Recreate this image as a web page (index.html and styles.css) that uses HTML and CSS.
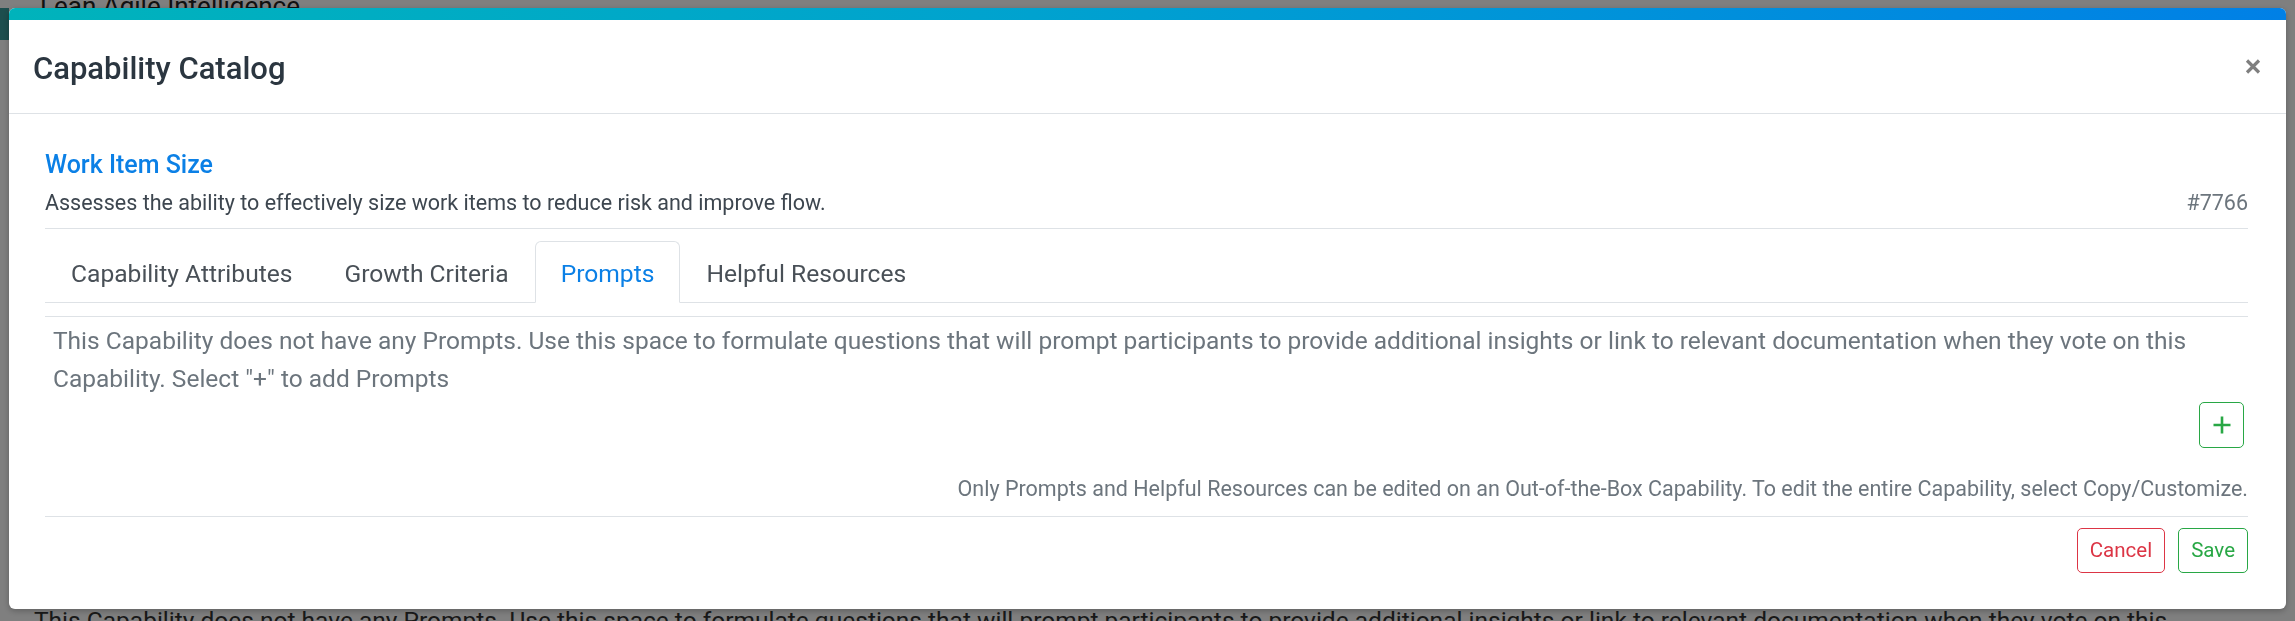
FILE: index.html
```html
<!DOCTYPE html>
<html lang="en">
<head>
<meta charset="utf-8">
<title>Capability Catalog</title>
<link rel="stylesheet" href="styles.css">
</head>
<body>
<div class="page">
  <header class="app-bar">
    <span class="logo"></span>
    <span class="brand">Lean Agile Intelligence</span>
  </header>
  <main class="page-main">
    <p class="page-text">This Capability does not have any Prompts. Use this space to formulate questions that will prompt participants to provide additional insights or link to relevant documentation when they vote on this Capability. Select "+" to add Prompts</p>
  </main>
</div>

<div class="backdrop"></div>

<div class="modal" role="dialog" aria-labelledby="modal-title">
  <div class="modal-accent"></div>
  <div class="modal-header">
    <h5 class="modal-title" id="modal-title">Capability Catalog</h5>
    <button class="close" type="button" aria-label="Close">
      <svg width="16" height="15" viewBox="0 0 16 15" aria-hidden="true">
        <path d="M2 1.5 L14 13.5 M14 1.5 L2 13.5" stroke="#7f7f7f" stroke-width="3.2" stroke-linecap="butt" fill="none"/>
      </svg>
    </button>
  </div>
  <div class="modal-body">
    <h6 class="cap-name">Work Item Size</h6>
    <div class="cap-desc-row">
      <span class="cap-desc">Assesses the ability to effectively size work items to reduce risk and improve flow.</span>
      <span class="cap-id">#7766</span>
    </div>
    <ul class="tabs">
      <li class="tab">Capability Attributes</li>
      <li class="tab">Growth Criteria</li>
      <li class="tab active">Prompts</li>
      <li class="tab">Helpful Resources</li>
    </ul>
    <div class="tab-pane">
      <p class="empty-text">This Capability does not have any Prompts. Use this space to formulate questions that will prompt participants to provide additional insights or link to relevant documentation when they vote on this Capability. Select "+" to add Prompts</p>
      <div class="add-row">
        <button class="btn-add" type="button" aria-label="Add Prompt">
          <svg width="18" height="18" viewBox="0 0 18 18" aria-hidden="true">
            <path d="M9 0.5 V17.5 M0.5 9 H17.5" stroke="#28a745" stroke-width="2.6" fill="none"/>
          </svg>
        </button>
      </div>
      <p class="note">Only Prompts and Helpful Resources can be edited on an Out-of-the-Box Capability. To edit the entire Capability, select Copy/Customize.</p>
    </div>
    <div class="modal-actions">
      <button class="btn btn-cancel" type="button">Cancel</button>
      <button class="btn btn-save" type="button">Save</button>
    </div>
  </div>
</div>
</body>
</html>
```

FILE: styles.css
```css
html, body {
  margin: 0;
  padding: 0;
}

body {
  background: #ffffff;
  font-family: Roboto, "Open Sans", Arial, sans-serif;
  color: #333333;
  overflow: hidden;
}

/* ---------- background page (under the overlay) ---------- */
.page {
  height: 621px;
  overflow: hidden;
}

.app-bar {
  display: flex;
  align-items: flex-start;
  height: 40px;
}

.logo {
  width: 9px;
  height: 32px;
  margin-top: 8px;
  background: #3a9c9c;
}

.brand {
  display: block;
  margin-left: 31px;
  font-size: 26px;
  line-height: 26px;
  margin-top: -7px;
  color: #222222;
}

.page-main {
  padding: 562px 60px 0 34px;
}

.page-text {
  margin: 0;
  font-size: 24.5px;
  line-height: 38px;
  color: #333333;
}

.backdrop {
  position: fixed;
  inset: 0;
  background: rgba(0, 0, 0, 0.5);
}

/* ---------- modal ---------- */
.modal {
  position: fixed;
  top: 8px;
  left: 9px;
  width: 2277px;
  background: #ffffff;
  border-radius: 6px;
  overflow: hidden;
  box-shadow: 0 2px 6px rgba(0, 0, 0, 0.25);
}

.modal-accent {
  height: 12px;
  background: linear-gradient(90deg, #00b3bb 0%, #00a2cf 45%, #0080e6 100%);
}

.modal-header {
  box-sizing: border-box;
  height: 94px;
  display: flex;
  align-items: center;
  justify-content: space-between;
  padding: 0 25px 0 24px;
  border-bottom: 1px solid #dee2e6;
}

.modal-title {
  margin: 0;
  padding-top: 4px;
  font-size: 31px;
  font-weight: 500;
  color: #2b3640;
  line-height: normal;
}

.close {
  display: flex;
  padding: 0;
  border: 0;
  background: transparent;
  cursor: pointer;
}

.modal-body {
  padding: 36px 38px 36px 36px;
}

.cap-name {
  margin: 0;
  font-size: 25px;
  line-height: 29px;
  font-weight: 500;
  color: #0b80e6;
}

.cap-desc-row {
  display: flex;
  justify-content: space-between;
  align-items: baseline;
  margin-top: 10px;
  padding-bottom: 11px;
  border-bottom: 1px solid #dee2e6;
  font-size: 21.5px;
  line-height: 28px;
}

.cap-desc {
  color: #3d464f;
}

.cap-id {
  color: #6c757d;
}

/* ---------- tabs ---------- */
.tabs {
  display: flex;
  list-style: none;
  margin: 12px 0 0;
  padding: 0;
  border-bottom: 1px solid #dee2e6;
}

.tab {
  padding: 17px 25px 14px;
  margin-bottom: -1px;
  border: 1px solid transparent;
  border-radius: 6px 6px 0 0;
  font-size: 24.6px;
  line-height: 29px;
  color: #495057;
}

.tab.active {
  color: #0b80e6;
  border-color: #dee2e6 #dee2e6 #ffffff;
  background: #ffffff;
}

.tab-pane {
  margin-top: 13px;
  border-top: 1px solid #dee2e6;
  padding: 5px 0 13px;
}

.empty-text {
  margin: 0;
  padding: 0 8px;
  font-size: 24.5px;
  line-height: 38px;
  color: #6c757d;
}

.add-row {
  display: flex;
  justify-content: flex-end;
  margin-top: 4px;
  padding-right: 4px;
}

.btn-add {
  box-sizing: border-box;
  width: 45px;
  height: 46px;
  display: flex;
  align-items: center;
  justify-content: center;
  padding: 0;
  background: #ffffff;
  border: 1px solid #28a745;
  border-radius: 5px;
}

.note {
  margin: 27px 0 0;
  text-align: right;
  font-size: 21.5px;
  line-height: 28px;
  color: #6c757d;
}

/* ---------- footer actions ---------- */
.modal-actions {
  display: flex;
  justify-content: flex-end;
  gap: 13px;
  border-top: 1px solid #dee2e6;
  padding-top: 11px;
}

.btn {
  box-sizing: border-box;
  height: 45px;
  padding: 0 12px;
  background: #ffffff;
  border: 1px solid;
  border-radius: 5px;
  font-family: Roboto, "Open Sans", Arial, sans-serif;
  font-size: 20.5px;
  line-height: 1;
}

.btn-cancel {
  color: #dc3545;
  border-color: #dc3545;
}

.btn-save {
  color: #28a745;
  border-color: #28a745;
}
```
